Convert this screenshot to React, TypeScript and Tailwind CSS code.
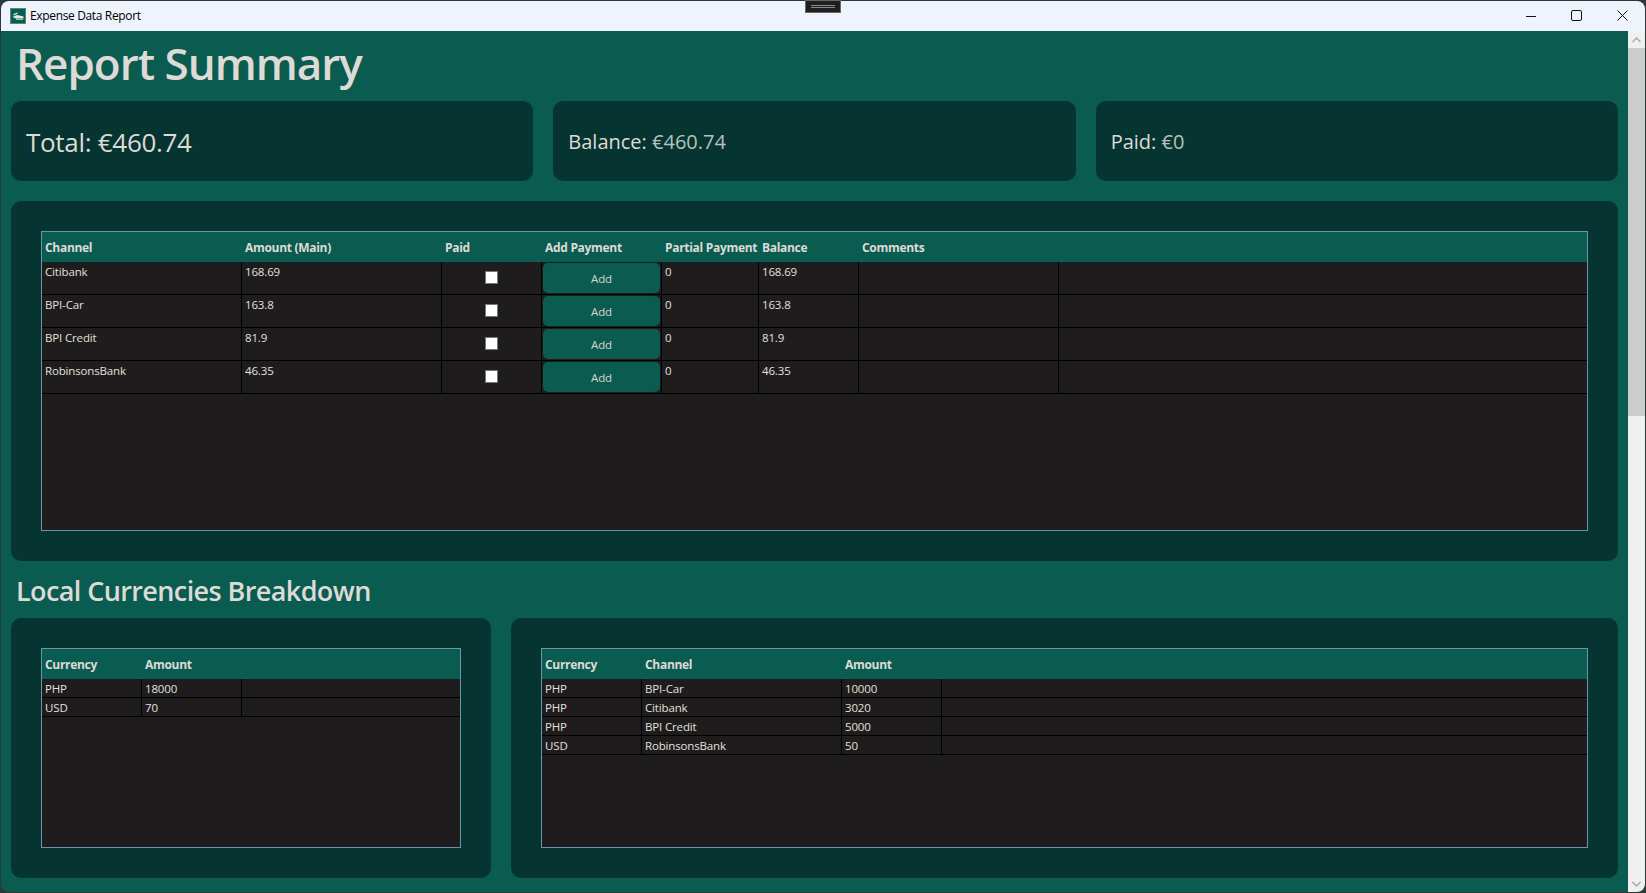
const FONT = "font-['Open_Sans','Noto_Sans',sans-serif]";

const mainColumns = [200, 200, 100, 120, 97, 100, 200];
const mainRows = [
  ['Citibank', '168.69', '0', '168.69'],
  ['BPI-Car', '163.8', '0', '163.8'],
  ['BPI Credit', '81.9', '0', '81.9'],
  ['RobinsonsBank', '46.35', '0', '46.35'],
];

function AppIcon() {
  return (
    <svg width="16" height="16" viewBox="0 0 16 16" className="shrink-0">
      <rect x="0.5" y="0.5" width="15" height="15" fill="#0b5c50" stroke="#4f8a80" />
      <path d="M3 6.5 L7 4.5 L8 5.2 L4 7.5 Z" fill="#dfe8e6" />
      <path d="M2.5 9 L7 7 L13.5 8.5 L13.5 10.5 L6 10.5 Z" fill="#e6eeec" />
      <path d="M6 11.5 L13 11.5" stroke="#a9c4bf" strokeWidth="1" />
    </svg>
  );
}

function TitleBar() {
  return (
    <div className="flex h-[30px] shrink-0 items-center bg-[#eff3fb] pl-[9px] text-black">
      <AppIcon />
      <span className="ml-[4px] text-[12px] tracking-[-0.35px]">Expense Data Report</span>
      <div className="ml-auto flex items-center pb-[1px]">
        <svg width="10" height="10" viewBox="0 0 10 10" className="mr-[35px]">
          <path d="M0 5.5 H10" stroke="#111" strokeWidth="1" />
        </svg>
        <svg width="11" height="11" viewBox="0 0 11 11" className="mr-[35px]">
          <rect x="0.5" y="0.5" width="10" height="10" rx="1.5" fill="none" stroke="#111" strokeWidth="1" />
        </svg>
        <svg width="11" height="11" viewBox="0 0 11 11" className="mr-[17px]">
          <path d="M0.5 0.5 L10.5 10.5 M10.5 0.5 L0.5 10.5" stroke="#111" strokeWidth="1" />
        </svg>
      </div>
    </div>
  );
}

function Scrollbar() {
  return (
    <div className="flex w-[17px] shrink-0 flex-col bg-[#f0f0f0]">
      <div className="flex h-[17px] items-center justify-center">
        <svg width="9" height="6" viewBox="0 0 9 6">
          <path d="M0.5 5 L4.5 1 L8.5 5" fill="none" stroke="#a8a8a8" strokeWidth="1.4" />
        </svg>
      </div>
      <div className="h-[368px] bg-[#cdcdcd]" />
      <div className="flex-1" />
      <div className="flex h-[17px] items-center justify-center">
        <svg width="9" height="6" viewBox="0 0 9 6">
          <path d="M0.5 1 L4.5 5 L8.5 1" fill="none" stroke="#a8a8a8" strokeWidth="1.4" />
        </svg>
      </div>
    </div>
  );
}

function StatCard({ label, value, big }: { label: string; value: string; big?: boolean }) {
  return (
    <div className="flex h-[80px] flex-1 items-center rounded-[10px] bg-[#063430] pl-[15px] pt-[2px]">
      {big ? (
        <span className="text-[26px] tracking-[-0.3px] text-[#dedad6]">{label} {value}</span>
      ) : (
        <span className="text-[20px] text-[#dedad6]">
          {label} <span className="text-[#b5c2be]">{value}</span>
        </span>
      )}
    </div>
  );
}

function HeaderRow({ columns, labels }: { columns: number[]; labels: string[] }) {
  return (
    <div className="flex h-[30px] shrink-0 items-center bg-[#0b5c50] pt-[2px] text-[12px] font-bold tracking-[-0.3px] text-[#dedad6]">
      {columns.map((w, i) => (
        <div key={i} className="whitespace-nowrap pl-[3px]" style={{ width: w }}>
          {labels[i] ?? ''}
        </div>
      ))}
    </div>
  );
}

function MainTable() {
  return (
    <div className="flex h-[300px] flex-col border border-[#6d93a8] bg-[#1e1c1d]">
      <HeaderRow
        columns={mainColumns}
        labels={['Channel', 'Amount (Main)', 'Paid', 'Add Payment', 'Partial Payment', 'Balance', 'Comments']}
      />
      {mainRows.map((row) => (
        <div key={row[0]} className="flex h-[33px] shrink-0 border-b border-black text-[11.5px] tracking-[-0.15px] text-[#e4e0dc]">
          <div className="w-[200px] border-r border-black pl-[3px] pt-[1px]">{row[0]}</div>
          <div className="w-[200px] border-r border-black pl-[3px] pt-[1px]">{row[1]}</div>
          <div className="flex w-[100px] items-center justify-center border-r border-black pb-[2px]">
            <div className="h-[13px] w-[13px] border border-[#767676] bg-white" />
          </div>
          <div className="w-[120px] border-r border-black p-[1px]">
            <div className="flex h-[30px] items-center justify-center rounded-[5px] bg-[#0b5c50] pt-[2px] text-[#d5d5d0]">Add</div>
          </div>
          <div className="w-[97px] border-r border-black pl-[3px] pt-[1px]">{row[2]}</div>
          <div className="w-[100px] border-r border-black pl-[3px] pt-[1px]">{row[3]}</div>
          <div className="w-[200px] border-r border-black" />
        </div>
      ))}
    </div>
  );
}

function SmallTable({ columns, labels, rows }: { columns: number[]; labels: string[]; rows: string[][] }) {
  return (
    <div className="flex h-[200px] flex-col border border-[#6d93a8] bg-[#1e1c1d]">
      <HeaderRow columns={columns} labels={labels} />
      {rows.map((row, r) => (
        <div key={r} className="flex h-[19px] shrink-0 items-stretch border-b border-black text-[11.5px] leading-[19px] tracking-[-0.15px] text-[#e4e0dc]">
          {columns.map((w, i) => (
            <div key={i} className="border-r border-black pl-[3px]" style={{ width: w }}>
              {row[i]}
            </div>
          ))}
        </div>
      ))}
    </div>
  );
}

export default function App() {
  return (
    <div className={`relative flex h-screen w-full flex-col overflow-hidden bg-[#2b3a38] p-[1px] ${FONT}`}>
      {/* snap-layout handle at the top of the window */}
      <div className="absolute left-[805px] top-0 z-10 flex h-[13px] w-[36px] flex-col items-center justify-center gap-[1px] border border-[#666] bg-[#1f1f1f]">
        <div className="h-[1px] w-[24px] bg-[#8a8a8a]" />
        <div className="h-[1px] w-[24px] bg-[#8a8a8a]" />
      </div>

      <div className="flex flex-1 flex-col overflow-hidden rounded-[8px]">
        <TitleBar />
        <div className="flex min-h-0 flex-1">
          <main className="min-w-0 flex-1 bg-[#0b5c50] px-[10px]">
            <h1 className="ml-[5px] h-[70px] text-[44px] font-semibold leading-[64px] tracking-[-1px] text-[#dedad6]">Report Summary</h1>

            <div className="flex gap-[20px]">
              <StatCard label="Total:" value="€460.74" big />
              <StatCard label="Balance:" value="€460.74" />
              <StatCard label="Paid:" value="€0" />
            </div>

            <section className="mt-[20px] h-[360px] rounded-[10px] bg-[#063430] p-[30px]">
              <MainTable />
            </section>

            <h2 className="ml-[5px] mt-[12px] h-[45px] text-[27px] font-semibold leading-[36px] tracking-[-0.6px] text-[#dedad6]">
              Local Currencies Breakdown
            </h2>

            <div className="flex gap-[20px]">
              <section className="h-[260px] w-[480px] shrink-0 rounded-[10px] bg-[#063430] p-[30px]">
                <SmallTable
                  columns={[100, 100]}
                  labels={['Currency', 'Amount']}
                  rows={[
                    ['PHP', '18000'],
                    ['USD', '70'],
                  ]}
                />
              </section>
              <section className="h-[260px] flex-1 rounded-[10px] bg-[#063430] p-[30px]">
                <SmallTable
                  columns={[100, 200, 100]}
                  labels={['Currency', 'Channel', 'Amount']}
                  rows={[
                    ['PHP', 'BPI-Car', '10000'],
                    ['PHP', 'Citibank', '3020'],
                    ['PHP', 'BPI Credit', '5000'],
                    ['USD', 'RobinsonsBank', '50'],
                  ]}
                />
              </section>
            </div>
          </main>
          <Scrollbar />
        </div>
      </div>
    </div>
  );
}
